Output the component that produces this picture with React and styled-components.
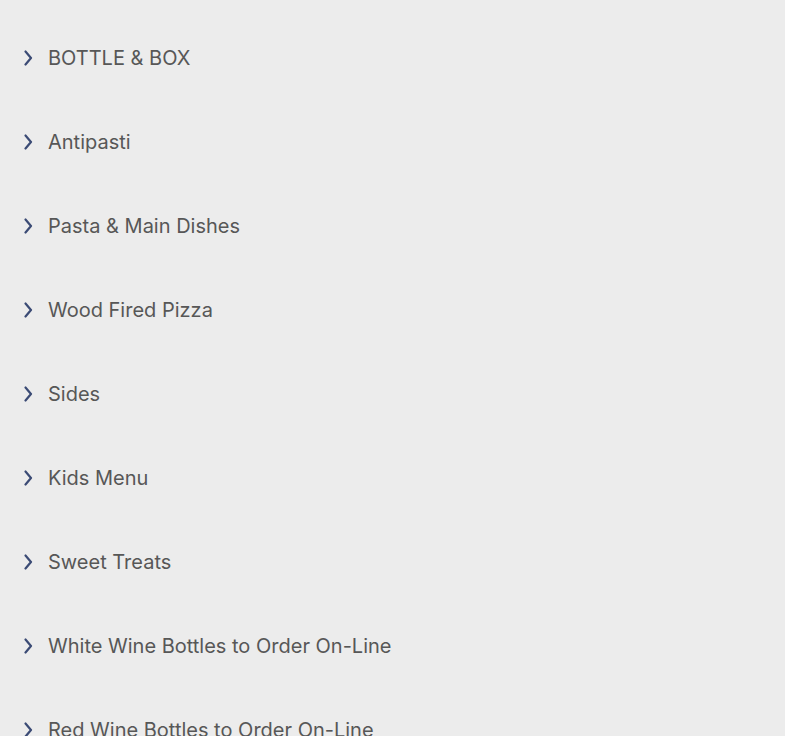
import React from "react";
import styled, { createGlobalStyle } from "styled-components";

const GlobalStyle = createGlobalStyle`
  html, body {
    margin: 0;
    padding: 0;
    background: #ececec;
  }
`;

const List = styled.ul`
  list-style: none;
  margin: 0;
  padding: 16px 0 0 0;
  font-family: "Inter", "Liberation Sans", sans-serif;
`;

const Item = styled.li`
  height: 84px;
  display: flex;
  align-items: center;
  padding-left: 22px;
`;

const Chevron = styled.svg`
  width: 12px;
  height: 16px;
  flex: none;
  margin-right: 14px;
`;

const Label = styled.span`
  font-size: 20px;
  color: #575757;
  letter-spacing: 0;
`;

const sections = [
  "BOTTLE & BOX",
  "Antipasti",
  "Pasta & Main Dishes",
  "Wood Fired Pizza",
  "Sides",
  "Kids Menu",
  "Sweet Treats",
  "White Wine Bottles to Order On-Line",
  "Red Wine Bottles to Order On-Line",
];

const App = () => (
  <>
    <GlobalStyle />
    <List>
      {sections.map(s => (
        <Item key={s}>
          <Chevron viewBox="0 0 12 16">
            <path
              d="M3.5 1.5 L9 8 L3.5 14.5"
              fill="none"
              stroke="#3b4b75"
              strokeWidth="2.2"
              strokeLinecap="round"
              strokeLinejoin="round"
            />
          </Chevron>
          <Label>{s}</Label>
        </Item>
      ))}
    </List>
  </>
);

export default App;
